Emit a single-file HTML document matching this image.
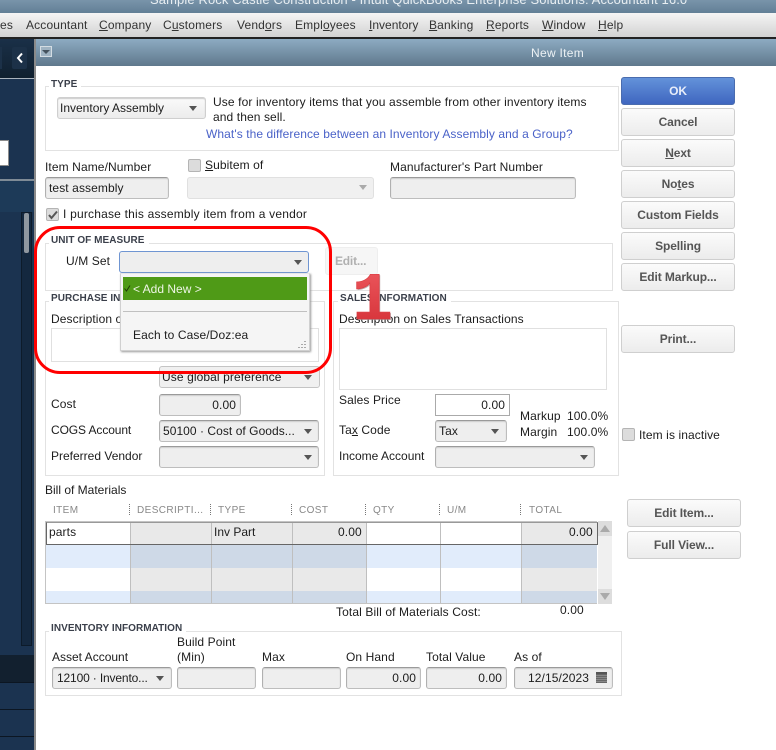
<!DOCTYPE html>
<html><head><meta charset="utf-8">
<style>
html,body{margin:0;padding:0}
body{width:776px;height:750px;overflow:hidden;position:relative;background:#fff;font-family:"Liberation Sans",sans-serif;font-size:12px;color:#1c1c1c}
div,span.a{position:absolute;box-sizing:border-box}
.t{white-space:nowrap;line-height:14px;letter-spacing:.1px}
.l{white-space:nowrap;line-height:12px;font-size:10px;font-weight:bold;color:#3a3f4a;background:#fff;padding:0 4px 0 2px;letter-spacing:.05px}
.m{white-space:nowrap;line-height:14px;color:#333;top:18px;letter-spacing:.15px}
.f{border:1px solid #e2e2e2;background:#fff}
.i{background:#eee;border:1px solid #bdbdbd;border-top-color:#9a9a9a;border-left-color:#b0b0b0;border-radius:3px;box-shadow:inset 0 1px 1px #ccc}
.r{text-align:right;line-height:20px;padding-right:4px;letter-spacing:.1px}
.a1{width:0;height:0;border-left:4.5px solid transparent;border-right:4.5px solid transparent;border-top:5px solid #555}
.b{width:114px;height:28px;border:1px solid #cfcfcf;border-radius:3px;background:linear-gradient(#fbfbfb,#ececec);text-align:center;line-height:26px;font-weight:bold;color:#555;white-space:nowrap;letter-spacing:-.1px}
.c{width:13px;height:13px;background:#dcdcdc;border:1px solid #b4b4b4;border-radius:2px}
.v{width:1px;background:#bfbfbf}
.h{white-space:nowrap;font-size:10px;line-height:12px;color:#888;letter-spacing:.4px;top:505px}
.d{width:1px;height:11px;top:504px;border-left:1px dotted #777}
</style></head>
<body>
<!-- title -->
<div style="left:0;top:0;width:776px;height:13px;background:linear-gradient(#7994aa,#627f96)"></div>
<div class="t" style="left:150px;top:-7px;font-size:13px;color:#e8eef2;letter-spacing:.11px">Sample Rock Castle Construction - Intuit QuickBooks Enterprise Solutions: Accountant 16.0</div>
<!-- menu -->
<div style="left:0;top:13px;width:776px;height:24px;background:linear-gradient(#f5f5f5,#d2d2d2)"></div>
<div style="left:0;top:37px;width:776px;height:2px;background:#222"></div>
<div class="m" style="left:0">es</div>
<div class="m" style="left:26px">Accountant</div>
<div class="m" style="left:99px"><u>C</u>ompany</div>
<div class="m" style="left:163px">C<u>u</u>stomers</div>
<div class="m" style="left:237px">Vend<u>o</u>rs</div>
<div class="m" style="left:295px">Empl<u>o</u>yees</div>
<div class="m" style="left:369px;letter-spacing:0"><u>I</u>nventory</div>
<div class="m" style="left:429px"><u>B</u>anking</div>
<div class="m" style="left:486px"><u>R</u>eports</div>
<div class="m" style="left:542px"><u>W</u>indow</div>
<div class="m" style="left:598px"><u>H</u>elp</div>
<!-- sidebar -->
<div style="left:0;top:39px;width:34px;height:711px;background:#1b3350"></div>
<div style="left:0;top:39px;width:34px;height:39px;background:linear-gradient(#1a3048,#10202f)"></div>
<div style="left:12px;top:47px;width:15px;height:22px;background:#1c3148;border-radius:2px"></div>
<div style="left:0;top:47px;width:2px;height:22px;background:#1c3148"></div>
<svg style="position:absolute;left:16px;top:52px" width="8" height="12"><path d="M6 1.5L2 6l4 4.5" fill="none" stroke="#fff" stroke-width="2"/></svg>
<div style="left:0;top:78px;width:34px;height:1px;background:#a9b3bc"></div>
<div style="left:0;top:140px;width:9px;height:26px;background:#fff;border:1px solid #8c8c8c;border-left:0"></div>
<div style="left:0;top:179px;width:34px;height:2px;background:#7f8b96"></div>
<div style="left:0;top:181px;width:34px;height:31px;background:#1d3a58"></div>
<div style="left:21px;top:212px;width:11px;height:434px;background:#14283f;border:1px solid #0d1b2a"></div>
<div style="left:24px;top:213px;width:5px;height:40px;background:#8f979f;border-radius:2px"></div>
<div style="left:0;top:655px;width:34px;height:27px;background:#12202f"></div>
<div style="left:0;top:682px;width:34px;height:1px;background:#0c1622"></div>
<div style="left:0;top:709px;width:34px;height:1px;background:#0c1622"></div>
<div style="left:0;top:736px;width:34px;height:1px;background:#0c1622"></div>
<div style="left:34px;top:39px;width:2px;height:711px;background:#8a8a8a"></div>
<!-- dialog title -->
<div style="left:36px;top:39px;width:740px;height:27px;background:linear-gradient(#8dabc2,#5f788c)"></div>
<div style="left:40px;top:46px;width:12px;height:11px;background:#9fb3c2;border:1px solid #d4dde3"></div>
<div class="a1" style="left:42px;top:50px;border-left-width:4px;border-right-width:4px;border-top:4px solid #44525d"></div>
<div class="t" style="left:531px;top:46px;color:#edf2f5;letter-spacing:.3px">New Item</div>

<!-- type -->
<div class="f" style="left:45px;top:86px;width:574px;height:65px"></div>
<div class="l" style="left:49px;top:79px">TYPE</div>
<div class="i" style="left:57px;top:97px;width:149px;height:22px;background:linear-gradient(#fafafa,#ececec);border-color:#cfcfcf"></div>
<div class="t" style="left:60px;top:101px;letter-spacing:0">Inventory Assembly</div>
<div class="a1" style="left:189px;top:106px"></div>
<div class="t" style="left:213px;top:95px;letter-spacing:.12px">Use for inventory items that you assemble from other inventory items</div>
<div class="t" style="left:213px;top:110px">and then sell.</div>
<div class="t" style="left:206px;top:127px;color:#4a62c8;letter-spacing:.08px">What's the difference between an Inventory Assembly and a Group?</div>

<!-- item name -->
<div class="t" style="left:45px;top:160px">Item Name/Number</div>
<div class="i" style="left:45px;top:177px;width:124px;height:22px"></div>
<div class="t" style="left:49px;top:181px">test assembly</div>
<div class="c" style="left:188px;top:159px"></div>
<div class="t" style="left:205px;top:158px"><u>S</u>ubitem of</div>
<div class="i" style="left:187px;top:177px;width:187px;height:22px;border-color:#e0e0e0;box-shadow:none;background:#f0f0f0"></div>
<div class="a1" style="left:359px;top:185px;border-top-color:#aaa"></div>
<div class="t" style="left:390px;top:160px">Manufacturer's Part Number</div>
<div class="i" style="left:390px;top:177px;width:186px;height:22px"></div>
<div class="c" style="left:46px;top:208px"></div>
<svg style="position:absolute;left:47px;top:209px" width="12" height="12"><path d="M2 6l2.5 3L10 2.5" fill="none" stroke="#555" stroke-width="2"/></svg>
<div class="t" style="left:63px;top:207px;letter-spacing:.2px">I purchase this assembly item from a vendor</div>

<!-- unit of measure -->
<div class="f" style="left:45px;top:243px;width:568px;height:48px"></div>
<div class="l" style="left:49px;top:235px">UNIT OF MEASURE</div>
<div class="t" style="left:66px;top:254px">U/M Set</div>
<div class="i" style="left:325px;top:247px;width:53px;height:28px;background:#f6f6f6;border-color:#eee;box-shadow:none"></div>
<div class="t" style="left:335px;top:254px;color:#b0b0b0;font-weight:bold;letter-spacing:-.2px">Edit...</div>

<!-- purchase -->
<div class="f" style="left:45px;top:301px;width:280px;height:175px"></div>
<div class="l" style="left:49px;top:293px">PURCHASE INFORMATION</div>
<div class="t" style="left:51px;top:312px">Description on Purchase Transactions</div>
<div style="left:51px;top:328px;width:268px;height:34px;border:1px solid #e0e0e0;background:#fff"></div>
<div class="i" style="left:159px;top:366px;width:161px;height:22px;background:#f0f0f0;box-shadow:none;border-color:#c4c4c4"></div>
<div class="t" style="left:162px;top:370px">Use global preference</div>
<div class="a1" style="left:304px;top:375px"></div>
<div class="t" style="left:51px;top:397px">Cost</div>
<div class="i r" style="left:159px;top:394px;width:82px;height:22px">0.00</div>
<div class="t" style="left:51px;top:423px;letter-spacing:-.1px">COGS Account</div>
<div class="i" style="left:159px;top:420px;width:160px;height:22px"></div>
<div class="t" style="left:163px;top:424px;letter-spacing:.05px">50100 · Cost of Goods...</div>
<div class="a1" style="left:304px;top:429px"></div>
<div class="t" style="left:51px;top:449px;letter-spacing:0">Preferred Vendor</div>
<div class="i" style="left:159px;top:446px;width:160px;height:22px"></div>
<div class="a1" style="left:304px;top:455px"></div>

<!-- sales -->
<div class="f" style="left:333px;top:301px;width:286px;height:175px"></div>
<div class="l" style="left:338px;top:293px">SALES INFORMATION</div>
<div class="t" style="left:339px;top:312px">Description on Sales Transactions</div>
<div style="left:339px;top:328px;width:268px;height:62px;border:1px solid #e0e0e0;background:#fff"></div>
<div class="t" style="left:339px;top:393px">Sales Price</div>
<div class="r" style="left:435px;top:394px;width:75px;height:22px;border:1px solid #aaa;background:#fff">0.00</div>
<div class="t" style="left:339px;top:423px">Ta<u>x</u> Code</div>
<div class="i" style="left:435px;top:420px;width:72px;height:22px"></div>
<div class="t" style="left:439px;top:424px">Tax</div>
<div class="a1" style="left:491px;top:429px"></div>
<div class="t" style="left:339px;top:449px;letter-spacing:0">Income Account</div>
<div class="i" style="left:435px;top:446px;width:160px;height:22px"></div>
<div class="a1" style="left:580px;top:455px"></div>
<div class="t" style="left:520px;top:409px">Markup</div>
<div class="t" style="left:567px;top:409px">100.0%</div>
<div class="t" style="left:520px;top:425px">Margin</div>
<div class="t" style="left:567px;top:425px">100.0%</div>

<!-- buttons -->
<div class="b" style="left:621px;top:77px;background:linear-gradient(#6392da,#3f66c0);border-color:#4a6cae;color:#e8eefa">OK</div>
<div class="b" style="left:621px;top:108px">Cancel</div>
<div class="b" style="left:621px;top:139px"><u>N</u>ext</div>
<div class="b" style="left:621px;top:170px">No<u>t</u>es</div>
<div class="b" style="left:621px;top:201px">Custom Fields</div>
<div class="b" style="left:621px;top:232px">Spellin<u>g</u></div>
<div class="b" style="left:621px;top:263px">Edit Markup...</div>
<div class="b" style="left:621px;top:325px">Print...</div>
<div class="c" style="left:622px;top:428px"></div>
<div class="t" style="left:639px;top:428px">Item is inactive</div>
<div class="b" style="left:627px;top:499px">Edit Item...</div>
<div class="b" style="left:627px;top:531px">Full View...</div>

<!-- BOM -->
<div class="t" style="left:45px;top:483px;letter-spacing:0">Bill of Materials</div>
<div class="h" style="left:53px">ITEM</div>
<div class="d" style="left:129px"></div>
<div class="h" style="left:137px">DESCRIPTI...</div>
<div class="d" style="left:210px"></div>
<div class="h" style="left:218px">TYPE</div>
<div class="d" style="left:291px"></div>
<div class="h" style="left:299px">COST</div>
<div class="d" style="left:365px"></div>
<div class="h" style="left:373px">QTY</div>
<div class="d" style="left:439px"></div>
<div class="h" style="left:447px">U/M</div>
<div class="d" style="left:520px"></div>
<div class="h" style="left:529px">TOTAL</div>

<div style="left:45px;top:521px;width:552px;height:83px;background:#fff;border:1px solid #c4c4c4;border-right:0"></div>
<div style="left:46px;top:545px;width:551px;height:23px;background:#e1ecfb"></div>
<div style="left:46px;top:591px;width:551px;height:12px;background:#e1ecfb"></div>
<div style="left:130px;top:522px;width:236px;height:81px;background:#e9e9e9"></div>
<div style="left:521px;top:522px;width:76px;height:81px;background:#e9e9e9"></div>
<div style="left:130px;top:545px;width:236px;height:23px;background:#ced9e7"></div>
<div style="left:130px;top:591px;width:236px;height:12px;background:#ced9e7"></div>
<div style="left:521px;top:545px;width:76px;height:23px;background:#ced9e7"></div>
<div style="left:521px;top:591px;width:76px;height:12px;background:#ced9e7"></div>
<div class="v" style="left:130px;top:522px;height:81px"></div>
<div class="v" style="left:211px;top:522px;height:81px"></div>
<div class="v" style="left:292px;top:522px;height:81px"></div>
<div class="v" style="left:366px;top:522px;height:81px"></div>
<div class="v" style="left:440px;top:522px;height:81px"></div>
<div class="v" style="left:521px;top:522px;height:81px"></div>
<div style="left:46px;top:522px;width:552px;height:23px;border:1px solid #666;border-top-color:#999"></div>
<div class="t" style="left:49px;top:525px">parts</div>
<div class="t" style="left:214px;top:525px;letter-spacing:0">Inv Part</div>
<div class="t" style="left:338px;top:525px">0.00</div>
<div class="t" style="left:569px;top:525px">0.00</div>
<div style="left:598px;top:521px;width:14px;height:83px;background:#f0f0f0"></div>
<div style="left:598px;top:521px;width:14px;height:15px;background:#ddd"></div>
<div style="left:598px;top:589px;width:14px;height:15px;background:#ddd"></div>
<div class="a1" style="left:600px;top:525px;border-top:0;border-bottom:7px solid #aaa;border-left-width:5px;border-right-width:5px"></div>
<div class="a1" style="left:600px;top:593px;border-top:7px solid #aaa;border-left-width:5px;border-right-width:5px"></div>
<div class="t" style="left:336px;top:605px;letter-spacing:.12px">Total Bill of Materials Cost:</div>
<div class="t" style="left:560px;top:603px">0.00</div>

<!-- inventory -->
<div class="f" style="left:45px;top:631px;width:577px;height:65px"></div>
<div class="l" style="left:49px;top:623px">INVENTORY INFORMATION</div>
<div class="t" style="left:177px;top:635px">Build Point</div>
<div class="t" style="left:177px;top:650px">(Min)</div>
<div class="t" style="left:52px;top:650px;letter-spacing:0">Asset Account</div>
<div class="t" style="left:262px;top:650px">Max</div>
<div class="t" style="left:346px;top:650px">On Hand</div>
<div class="t" style="left:426px;top:650px">Total Value</div>
<div class="t" style="left:514px;top:650px">As of</div>
<div class="i" style="left:52px;top:667px;width:120px;height:22px"></div>
<div class="t" style="left:57px;top:671px;letter-spacing:-.15px">12100 · Invento...</div>
<div class="a1" style="left:156px;top:676px"></div>
<div class="i" style="left:177px;top:667px;width:79px;height:22px"></div>
<div class="i" style="left:262px;top:667px;width:79px;height:22px"></div>
<div class="i r" style="left:346px;top:667px;width:75px;height:22px">0.00</div>
<div class="i r" style="left:426px;top:667px;width:81px;height:22px">0.00</div>
<div class="i" style="left:514px;top:667px;width:99px;height:22px"></div>
<div class="t" style="left:528px;top:671px">12/15/2023</div>
<div style="left:596px;top:672px;width:11px;height:11px;background:repeating-linear-gradient(0deg,#666 0 1px,#888 1px 2px);border-top:2px solid #555"></div>

<!-- UM dropdown + popup -->
<div class="i" style="left:119px;top:251px;width:190px;height:22px;border:1px solid #6f95d2;box-shadow:none"></div>
<div class="a1" style="left:294px;top:260px"></div>
<div style="left:120px;top:273px;width:190px;height:78px;background:#f5f5f5;border:1px solid #d0d0d0;border-top-color:#e6e6e6;box-shadow:1px 1px 2px #999"></div>
<div style="left:123px;top:277px;width:184px;height:23px;background:#4f9a17"></div>
<div class="t" style="left:133px;top:282px;color:#eef5e6;letter-spacing:0">&lt; Add New &gt;</div>
<svg style="position:absolute;left:124px;top:285px" width="7" height="7"><path d="M.5 3.5L2.5 6 6 .5" fill="none" stroke="#1d3a05" stroke-width="1"/></svg>
<div style="left:123px;top:311px;width:184px;height:1px;background:#c0c0c0"></div>
<div class="t" style="left:133px;top:328px;letter-spacing:.1px">Each to Case/Doz:ea</div>
<svg style="position:absolute;left:297px;top:340px" width="10" height="9"><path d="M7 1h2v1H7zM4 4h2v1H4zM7 4h2v1H7zM1 7h2v1H1zM4 7h2v1H4zM7 7h2v1H7z" fill="#aaa"/></svg>

<!-- red outline -->
<div style="left:34px;top:226px;width:298px;height:148px;border:3px solid #f00;border-radius:26px"></div>

<!-- big 1 -->
<svg style="position:absolute;left:350px;top:262px" width="46" height="66">
<defs><linearGradient id="g" x1="0" y1="0" x2="0" y2="1"><stop offset="0" stop-color="#ee5a60"/><stop offset="1" stop-color="#d02a30"/></linearGradient></defs>
<text x="3" y="58" font-family="Liberation Mono" font-weight="bold" font-size="68" fill="#a8878a" opacity=".7">1</text>
<text x="2" y="57" font-family="Liberation Mono" font-weight="bold" font-size="68" fill="url(#g)" stroke="#d9383e" stroke-width=".6">1</text>
</svg>
</body></html>
